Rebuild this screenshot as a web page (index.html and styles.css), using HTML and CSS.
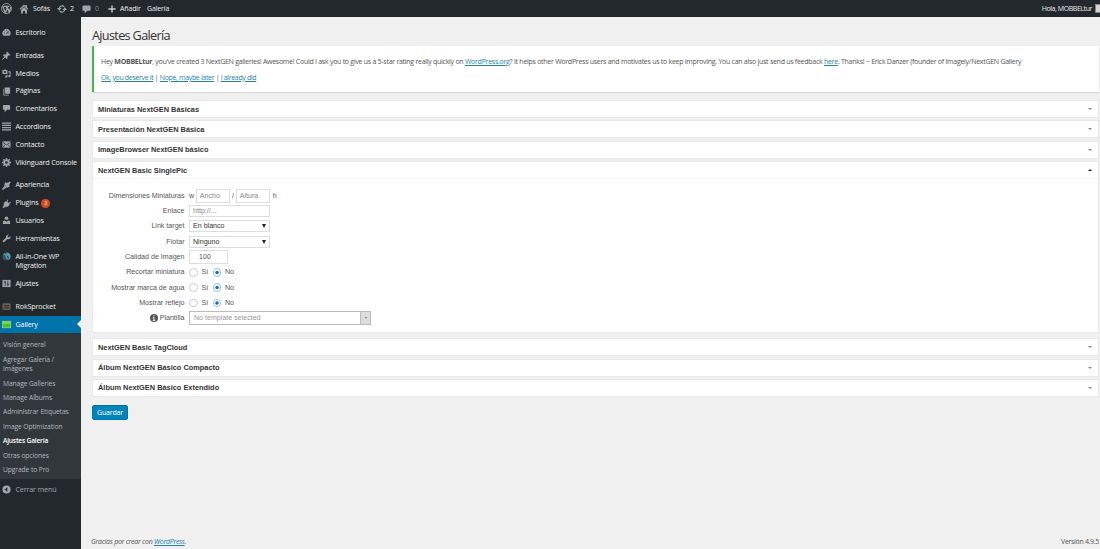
FILE: index.html
```html
<!DOCTYPE html>
<html lang="es">
<head>
    <meta charset="UTF-8">
    <title>Ajustes Galería</title>
    <link rel="stylesheet" href="styles.css">
</head>
<body>
    <header class="adminbar">
        <svg class="bar-icon logo" viewBox="0 0 20 20"><circle cx="10" cy="10" r="9" fill="none" stroke="currentColor" stroke-width="1.6"/><path d="M3 6l5 12 3-8-2-4H5m4 0h6m-4 0l4 11 3-10" fill="none" stroke="currentColor" stroke-width="2.4"/></svg>
        <svg class="bar-icon home" viewBox="0 0 20 20"><path d="M10 1L1 10l1.500 1.500L10 4.500l7.500 7L19 10l-3-3V2h-3v2zM4 12l6-6 6 6v7h-4v-5H8v5H4z" fill="currentColor"/></svg>
        <span class="bar-text site">Sofás</span>
        <svg class="bar-icon update" viewBox="0 0 22 20"><path d="M5 9a6.500 6.500 0 0 1 11-4M17 11a6.500 6.500 0 0 1-11 4" fill="none" stroke="currentColor" stroke-width="2.600"/><path d="M0 8h10l-5 6zM12 12h10l-5-6z" fill="currentColor"/></svg>
        <span class="bar-text count">2</span>
        <svg class="bar-icon talk" viewBox="0 0 20 20"><path d="M3 2h14q2 0 2 2v8q0 2-2 2h-5l-6 6v-6H3q-2 0-2-2V4q0-2 2-2z" fill="currentColor"/></svg>
        <span class="bar-text zero">0</span>
        <svg class="bar-icon plus" viewBox="0 0 20 20"><path d="M10 1v18M1 10h18" stroke="currentColor" stroke-width="3.500"/></svg>
        <span class="bar-text add">Añadir</span>
        <span class="bar-text gal">Galería</span>
        <span class="bar-text hello">Hola, MOBBELtur</span>
        <span class="avatar"></span>
    </header>

    <div class="wrap">
        <nav class="sidebar">
            <a class="item"><svg viewBox="0 0 20 20"><path d="M3 17a9 9 0 1 1 14 0z" fill="currentColor"/><path d="M10 13l4-6M4 11h2M6 6l1 1M10 4v2M14 11h2" stroke="#23282d" stroke-width="1.800"/></svg><span>Escritorio</span></a>
            <div class="sep"></div>
            <a class="item"><svg viewBox="0 0 20 20"><path d="M11 1l8 8-2 1-2-.500-3 3 .500 4-2 1.500-3.500-3.500L1 20l-1-1 5.500-6L2 9.500 3.500 7.500l4 .500 3-3L10 3z" fill="currentColor"/></svg><span>Entradas</span></a>
            <a class="item"><svg viewBox="0 0 20 20"><path d="M1 2h3l1-1h3l1 1h3v9H1z" fill="currentColor"/><circle cx="6.500" cy="6.500" r="2.300" fill="#23282d"/><path d="M14 5h5v11a2.500 2.500 0 1 1-2-2.500V8h-3zM12 13v4a2.500 2.500 0 1 1-2-2.500V13z" fill="currentColor"/></svg><span>Medios</span></a>
            <a class="item"><svg viewBox="0 0 20 20"><path d="M6 1h12v14H6zM3 4h1.500v13H15v2H3z" fill="currentColor"/></svg><span>Páginas</span></a>
            <a class="item"><svg viewBox="0 0 20 20"><path d="M4 2h12q2 0 2 2v7q0 2-2 2h-5l-5 6v-6H4q-2 0-2-2V4q0-2 2-2z" fill="currentColor"/></svg><span>Comentarios</span></a>
            <a class="item"><svg viewBox="0 0 20 20"><path d="M0 2.500h20M0 7.500h20M0 12.500h20M0 17.500h20" stroke="currentColor" stroke-width="3"/></svg><span>Accordions</span></a>
            <a class="item"><svg viewBox="0 0 20 20"><path d="M1 3h18v14H1z" fill="currentColor"/><path d="M2 5l8 6 8-6M2 16l5-6M18 16l-5-6" fill="none" stroke="#23282d" stroke-width="1.500"/></svg><span>Contacto</span></a>
            <a class="item"><svg viewBox="0 0 20 20"><circle cx="10" cy="10" r="5" fill="none" stroke="currentColor" stroke-width="4"/><path d="M10 0v4M10 16v4M0 10h4M16 10h4M3 3l3 3M14 14l3 3M3 17l3-3M14 6l3-3" stroke="currentColor" stroke-width="3.200"/></svg><span>Vikinguard Console</span></a>
            <div class="sep"></div>
            <a class="item"><svg viewBox="0 0 20 20"><path d="M7 3l4 1.500L18 1l1.500 1.500L16 8l1 4-5 3-7-7zM5 9l6 6-3 .500L2 20l-2-2 4.500-6z" fill="currentColor"/></svg><span>Apariencia</span></a>
            <a class="item"><svg viewBox="0 0 20 20"><path d="M12 1l2 1-2 4 3 3 4-3 1 2-4 3 1 2-4 4H8l-4 3-3-1 3-5V9l4-4 2 1z" fill="currentColor"/></svg><span>Plugins</span><b class="badge">2</b></a>
            <a class="item"><svg viewBox="0 0 20 20"><circle cx="10" cy="5" r="4" fill="currentColor"/><path d="M2 18v-5q0-3 4-3l4 3 4-3q4 0 4 3v5z" fill="currentColor"/></svg><span>Usuarios</span></a>
            <a class="item"><svg viewBox="0 0 20 20"><path d="M15 1l-3 4 3 3 4-3c1 5-3 8-7 6l-8 8-3-3 8-8c-1-4 2-7 6-7z" fill="currentColor"/></svg><span>Herramientas</span></a>
            <a class="item double"><svg viewBox="0 0 20 20"><circle cx="10" cy="10" r="9" fill="#31566c"/><path d="M10 1a9 9 0 0 1 4 17c3-6 1-9-4-10z" fill="#4aa3ba"/><path d="M4 4q5 0 5 5t5 7" stroke="#8bb5c4" stroke-width="2" fill="none"/></svg><span>All-in-One WP<br>Migration</span></a>
            <a class="item"><svg viewBox="0 0 20 20"><path d="M1 2h18v16H1z" fill="currentColor"/><path d="M7 4v12M13 4v12M4 7h5M11 12h5" stroke="#23282d" stroke-width="1.700"/></svg><span>Ajustes</span></a>
            <div class="sep"></div>
            <a class="item"><svg viewBox="0 0 20 20"><rect x="1" y="3" width="18" height="15" rx="3" fill="#6a6354"/><path d="M4 8h12M4 13h12" stroke="#35312a" stroke-width="2.500"/></svg><span>RokSprocket</span></a>
            <a class="item current"><svg class="green" viewBox="0 0 20 20"><path d="M0 2h20v16H0z" fill="#b9e6a0"/><path d="M1 3h18v14H1z" fill="#4fbd2b"/><path d="M1 3h18v6H1z" fill="#7bd64f"/></svg><span>Gallery</span></a>
            <div class="submenu">
                <a>Visión general</a>
                <a class="two">Agregar Galería /<br>Imágenes</a>
                <a>Manage Galleries</a>
                <a>Manage Albums</a>
                <a>Administrar Etiquetas</a>
                <a>Image Optimization</a>
                <a class="active">Ajustes Galería</a>
                <a>Otras opciones</a>
                <a>Upgrade to Pro</a>
            </div>
            <a class="item collapse"><svg viewBox="0 0 20 20"><circle cx="10" cy="10" r="9" fill="currentColor"/><path d="M12 5v10l-6-5z" fill="#23282d"/></svg><span>Cerrar menú</span></a>
        </nav>

        <main class="content">
            <h1>Ajustes Galería</h1>
            <div class="notice">
                <p class="msg">Hey <b>MOBBELtur</b>, you've created 3 NextGEN galleries! Awesome! Could I ask you to give us a 5-star rating really quickly on <a>WordPress.org</a>? It helps other WordPress users and motivates us to keep improving. You can also just send us feedback <a>here</a>. Thanks! ~ Erick Danzer (founder of Imagely/NextGEN Gallery</p>
                <p class="links"><a>Ok, you deserve it</a> | <a>Nope, maybe later</a> | <a>I already did</a></p>
            </div>

            <div class="accordion">
                <h3><span>Miniaturas NextGEN Básicas</span><i class="arrow"></i></h3>
                <h3><span>Presentación NextGEN Básica</span><i class="arrow"></i></h3>
                <h3><span>ImageBrowser NextGEN básico</span><i class="arrow"></i></h3>
                <section class="open">
                    <h3><span>NextGEN Basic SinglePic</span><i class="arrow up"></i></h3>
                    <div class="form">
                        <label>Dimensiones Miniaturas</label>
                        <div class="field dims"><span>w</span><span class="input size">Ancho</span><span>/</span><span class="input size">Altura</span><span class="h">h</span></div>
                        <label>Enlace</label>
                        <div class="field"><span class="input url">http://...</span></div>
                        <label>Link target</label>
                        <div class="field"><span class="input select">En blanco<i class="caret"></i></span></div>
                        <label>Flotar</label>
                        <div class="field"><span class="input select">Ninguno<i class="caret"></i></span></div>
                        <label>Calidad de Imagen</label>
                        <div class="field"><span class="input quality">100</span></div>
                        <label>Recortar miniatura</label>
                        <div class="field radios"><i class="radio"></i><span>Sí</span><i class="radio on"></i><span>No</span></div>
                        <label>Mostrar marca de agua</label>
                        <div class="field radios"><i class="radio"></i><span>Sí</span><i class="radio on"></i><span>No</span></div>
                        <label>Mostrar reflejo</label>
                        <div class="field radios"><i class="radio"></i><span>Sí</span><i class="radio on"></i><span>No</span></div>
                        <label><svg class="info" viewBox="0 0 20 20"><circle cx="10" cy="10" r="10" fill="#555"/><path d="M10 3v3M7 9h3v7M7 16h6" stroke="#fff" stroke-width="2.400" fill="none"/></svg>Plantilla</label>
                        <div class="field"><span class="template">No template selected<i class="drop"></i></span></div>
                    </div>
                </section>
                <h3><span>NextGEN Basic TagCloud</span><i class="arrow"></i></h3>
                <h3><span>Álbum NextGEN Básico Compacto</span><i class="arrow"></i></h3>
                <h3><span>Álbum NextGEN Básico Extendido</span><i class="arrow"></i></h3>
            </div>
            <button class="save">Guardar</button>

            <footer>
                <em>Gracias por crear con <a>WordPress</a>.</em>
                <span class="version">Versión 4.9.5</span>
            </footer>
        </main>
    </div>
</body>
</html>
```
FILE: styles.css
```css
* {
    box-sizing: border-box;
}

body {
    margin: 0;
    height: 549px;
    display: flex;
    flex-direction: column;
    overflow: hidden;
    background: #f0f0f0;
    color: #555;
    font-family: "Open Sans", "Noto Sans", sans-serif;
    font-size: 7px;
}

a {
    color: #2583ad;
    text-decoration: underline;
}

/* Top bar */
.adminbar {
    display: flex;
    align-items: center;
    flex: none;
    height: 17px;
    background: #23282d;
    color: #eee;
    letter-spacing: -0.150px;
    white-space: nowrap;
}

.bar-icon {
    width: 10px;
    height: 10px;
    color: #a0a5aa;
    flex: none;
}

.logo { width: 11px; height: 11px; margin-left: 1px; }
.home { margin-left: 7px; }
.site { margin-left: 4px; width: 24px; }
.update { width: 10px; }
.count { margin-left: 3px; width: 12px; }
.talk { width: 9px; }
.zero { margin-left: 4px; width: 13px; color: #888; }
.plus { width: 8px; height: 8px; color: #ccc; }
.add { margin-left: 4px; width: 27px; }

.hello {
    margin-left: auto;
    letter-spacing: -0.420px;
}

.avatar {
    width: 5px;
    height: 9px;
    margin-left: 3px;
    background: #d5d5d5;
    border: 1px solid #888;
    border-right: 0;
}

.wrap {
    display: flex;
    flex: 1;
    min-height: 0;
}

/* Side menu */
.sidebar {
    width: 80.500px;
    flex: none;
    padding-top: 6.600px;
    background: #23282d;
}

.sidebar a {
    text-decoration: none;
    white-space: nowrap;
}

.item {
    position: relative;
    display: flex;
    align-items: center;
    height: 17.800px;
    padding-left: 2px;
    color: #eee;
    font-size: 7.200px;
    line-height: 9.500px;
    letter-spacing: -0.170px;
}

.item svg {
    width: 9px;
    height: 9px;
    margin-right: 4.500px;
    color: #a0a5aa;
    flex: none;
}

.double {
    height: 27.200px;
    align-items: flex-start;
    padding-top: 4.200px;
}

.sep {
    height: 5.200px;
}

.badge {
    width: 9px;
    height: 9px;
    margin-left: 3px;
    border-radius: 50%;
    background: #d54e21;
    color: #fff;
    font-size: 5px;
    font-weight: normal;
    line-height: 9px;
    text-align: center;
}

.current {
    background: #0073aa;
    color: #fff;
}

.current::after {
    content: "";
    position: absolute;
    right: 0;
    top: 4.500px;
    border: 4.500px solid transparent;
    border-left: 0;
    border-right-color: #f0f0f0;
}

.submenu {
    display: flex;
    flex-direction: column;
    height: 146px;
    padding: 4.800px 0 0 3px;
    background: #32373c;
}

.submenu a {
    height: 14.450px;
    line-height: 14.450px;
    font-size: 6.700px;
    letter-spacing: -0.090px;
    color: #b4b9be;
}

.submenu .two {
    height: 24px;
    padding-top: 2.200px;
    line-height: 9.600px;
}

.submenu .active {
    color: #fff;
    font-weight: 600;
    letter-spacing: -0.220px;
}

.collapse {
    margin-top: 1.500px;
    color: #a0a5aa;
}

/* Main area */
.content {
    flex: 1;
    display: flex;
    flex-direction: column;
    padding: 0 1px 0 11.500px;
    min-width: 0;
}

h1 {
    margin: 9px 0 2px;
    height: 18px;
    font-size: 12.700px;
    font-weight: 400;
    line-height: 19px;
    letter-spacing: -0.680px;
    color: #333;
}

.notice {
    height: 46px;
    padding: 10px 0 0 7px;
    border-left: 2px solid #46b450;
    background: #fff;
    box-shadow: 0 1px 1px rgba(0, 0, 0, 0.1);
    letter-spacing: -0.270px;
    white-space: nowrap;
}

.notice p {
    margin: 0 0 4px;
    line-height: 12px;
}

.notice .links {
    letter-spacing: -0.340px;
}

.accordion {
    margin-top: 8px;
}

h3 {
    display: flex;
    align-items: center;
    justify-content: space-between;
    height: 18px;
    margin: 0 0 2.400px;
    padding: 0 6px 0 5px;
    background: #fff;
    border: 1px solid #e8e8e8;
    color: #333;
    font: bold 7.400px "Liberation Sans", Arial, sans-serif;
}

.arrow {
    border: 2px solid transparent;
    border-top-color: #888;
    border-bottom: 0;
}

.arrow.up {
    border-top: 0;
    border-bottom: 2.500px solid #222;
}

.open {
    height: 172px;
    margin-bottom: 5px;
    background: #fff;
    border: 1px solid #e8e8e8;
}

.open h3 {
    height: 17px;
    margin: 0;
    padding: 0 6px 0 5px;
    border: 0;
    border-bottom: 1px solid #f4f4f4;
}

.form {
    display: grid;
    grid-template-columns: 91.500px 1fr;
    grid-auto-rows: 15.300px;
    column-gap: 4.500px;
    padding-top: 9px;
    align-items: center;
    font-family: "Liberation Sans", Arial, sans-serif;
    font-size: 7.100px;
}

.form label {
    display: flex;
    align-items: center;
    justify-content: flex-end;
    white-space: nowrap;
}

.field {
    display: flex;
    align-items: center;
}

.input {
    display: flex;
    align-items: center;
    width: 81px;
    height: 12px;
    padding: 0 3px;
    border: 1px solid #ddd;
}

.dims .size {
    width: 34.500px;
    height: 14px;
    color: #888;
}

.dims {
    gap: 1.700px;
}

.dims .h {
    margin-left: 1px;
}

.url {
    color: #888;
}

.select {
    justify-content: space-between;
    color: #333;
}

.caret {
    border: 2px solid transparent;
    border-top: 4px solid #222;
    border-bottom: 0;
}

.quality {
    width: 39px;
    height: 14px;
    padding-left: 9px;
}

.radio {
    width: 8.500px;
    height: 8.500px;
    margin-right: 4px;
    border: 1px solid #ccc;
    border-radius: 50%;
}

.radios span {
    width: 11px;
}

.radio.on {
    border-color: #8fc4e6;
    background: radial-gradient(circle, #1e6fa8 1.300px, #fff 2.100px);
}

.info {
    width: 8px;
    height: 8px;
    margin-right: 2px;
}

.template {
    display: flex;
    align-items: center;
    justify-content: space-between;
    width: 182px;
    height: 14px;
    padding-left: 4px;
    border: 1px solid #bbb;
    color: #999;
}

.drop {
    display: flex;
    align-items: center;
    justify-content: center;
    width: 10px;
    height: 12px;
    border-left: 1px solid #bbb;
    background: #ddd;
}

.drop::after {
    content: "";
    border: 1.500px solid transparent;
    border-top: 2px solid #777;
    border-bottom: 0;
}

.save {
    align-self: flex-start;
    width: 36px;
    height: 15px;
    margin-top: 6px;
    padding: 0;
    border: 1px solid #0073aa;
    border-radius: 2px;
    background: #0085ba;
    color: #fff;
    font-family: inherit;
    font-size: 7px;
    letter-spacing: -0.200px;
    line-height: 12px;
}

footer {
    display: flex;
    justify-content: space-between;
    margin-top: auto;
    margin-left: -1px;
    height: 14px;
    line-height: 13px;
    letter-spacing: -0.260px;
}

.version {
    letter-spacing: -0.320px;
}
```
